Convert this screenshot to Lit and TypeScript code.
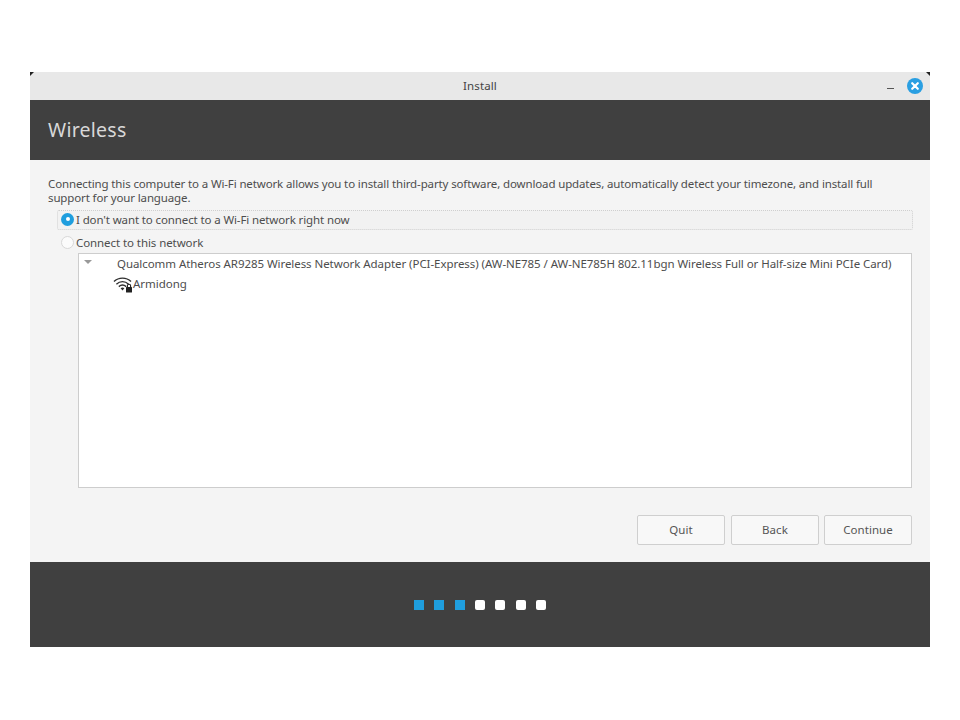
import { LitElement, html, css } from "lit";
import { customElement } from "lit/decorators.js";

@customElement("app-root")
export class AppRoot extends LitElement {
  static styles = css`
    :host { display: block; width: 960px; height: 720px; background: #fff; font-family: "Noto Sans", "Open Sans", sans-serif; font-size: 11.5px; color: #4d4d4d; }
    .page { padding-top: 72px; padding-left: 30px; width: 900px; }
    .window { position: relative; width: 900px; height: 575px; display: flex; flex-direction: column; background: #f4f4f4; }
    .corner { position: absolute; top: 0; width: 4px; height: 4px; background: #222; }
    .corner.l { left: 0; clip-path: polygon(0 0, 100% 0, 0 100%); }
    .corner.r { right: 0; clip-path: polygon(0 0, 100% 0, 100% 100%); }
    .titlebar { height: 28px; flex: none; background: #e8e8e8; display: grid; grid-template-columns: 1fr auto 1fr; align-items: center; }
    .title { grid-column: 2; font-size: 11.5px; color: #444; letter-spacing: 0.1px; padding-bottom: 1px; }
    .winbtns { grid-column: 3; justify-self: end; display: flex; align-items: center; gap: 13px; padding-right: 7px; padding-bottom: 1px; }
    .min { width: 7px; height: 1px; background: #555; margin-top: 5px; }
    .close { display: block; width: 16px; height: 16px; }
    .header { height: 60px; flex: none; background: #404040; display: flex; align-items: center; padding-left: 18px; font-size: 19.5px; color: #d8d8d8; box-sizing: border-box; padding-bottom: 1px; letter-spacing: 0.25px; }
    .content { flex: 1; display: flex; flex-direction: column; padding: 17px 18px 17px 18px; min-height: 0; }
    .intro { margin: 0; line-height: 14px; font-size: 11.5px; letter-spacing: -0.13px; }
    .radio-row { display: flex; align-items: center; gap: 2px; height: 20px; box-sizing: border-box; padding-left: 13px; letter-spacing: -0.12px; }
    .radio-row.focus { margin-top: 5px; margin-left: 9px; margin-right: -1px; padding-left: 3px; padding-bottom: 2px; border: 1px dotted #cfcfcf; border-radius: 2px; background: #f2f2f2; }
    .radio-row.plain { margin-top: 3px; padding-bottom: 1px; letter-spacing: -0.08px; }
    .dot { width: 13px; height: 13px; box-sizing: border-box; border-radius: 50%; flex: none; }
    .dot.on { background: #1f9ede; display: flex; align-items: center; justify-content: center; }
    .dot.on::after { content: ""; width: 4px; height: 4px; border-radius: 50%; background: #fff; }
    .dot.off { background: #fbfbfb; border: 1px solid #d8d8d8; }
    .tree { flex: 1; margin: 0 0 0 30px; background: #fff; border: 1px solid #cdcdcd; min-height: 0; padding-top: 1px; }
    .adapter { display: flex; align-items: center; height: 16px; padding-left: 5px; letter-spacing: -0.06px; white-space: nowrap; }
    .arrow { width: 0; height: 0; border-left: 4.5px solid transparent; border-right: 4.5px solid transparent; border-top: 4px solid #999; margin-right: 25px; margin-bottom: 3px; }
    .net { display: flex; align-items: center; height: 17px; margin-top: 4px; padding-left: 34px; letter-spacing: -0.02px; }
    .wifi { width: 20px; height: 17px; flex: none; display: block; margin-top: 2px; }
    .buttons { display: flex; justify-content: flex-end; gap: 5px; margin-top: 27px; }
    .btn { width: 88px; height: 30px; box-sizing: border-box; border: 1px solid #cfcfcf; border-radius: 2px; background: #f8f8f8; font: inherit; color: #555; padding: 0 0 2px; font-size: 11.5px; letter-spacing: 0.05px; }
    .btn.first { margin-right: 1px; }
    .footer { height: 85px; flex: none; background: #404040; display: flex; align-items: center; justify-content: center; gap: 10.3px; }
    .step { width: 10px; height: 10px; border-radius: 2px; background: #fff; }
    .step.done { background: #1f9ede; border-radius: 0; }
  `;

  render() {
    const steps = [1, 1, 1, 0, 0, 0, 0];
    return html`
      <div class="page">
        <div class="window">
          <div class="titlebar">
            <span class="title">Install</span>
            <div class="winbtns">
              <span class="min"></span>
              <svg class="close" viewBox="0 0 16 16">
                <circle cx="8" cy="8" r="8" fill="#2a9fe2"></circle>
                <path d="M5.2 5.2 10.8 10.8M10.8 5.2 5.2 10.8" stroke="#fff" stroke-width="2.2" stroke-linecap="round"></path>
              </svg>
            </div>
          </div>
          <div class="header">Wireless</div>
          <div class="content">
            <p class="intro">Connecting this computer to a Wi-Fi network allows you to install third-party software, download updates, automatically detect your timezone, and install full support for your language.</p>
            <div class="radio-row focus"><span class="dot on"></span>I don't want to connect to a Wi-Fi network right now</div>
            <div class="radio-row plain"><span class="dot off"></span>Connect to this network</div>
            <div class="tree">
              <div class="adapter"><span class="arrow"></span>Qualcomm Atheros AR9285 Wireless Network Adapter (PCI-Express) (AW-NE785 / AW-NE785H 802.11bgn Wireless Full or Half-size Mini PCIe Card)</div>
              <div class="net">
                <svg class="wifi" viewBox="0 0 20 17">
                  <g fill="none" stroke="#2e2e2e" stroke-width="1.4">
                    <path d="M1 5.6C5.6 1 13.4 1 18 5.6"></path>
                    <path d="M3.4 8.2C7 4.8 12 4.8 15.6 8.2"></path>
                    <path d="M5.8 10.6C8 8.8 11 8.8 13.2 10.6"></path>
                  </g>
                  <path d="M7.6 12.2C8.8 11.2 10.2 11.2 11.4 12.2L9.5 14.4Z" fill="#2e2e2e"></path>
                  <rect x="13" y="11" width="6" height="5.4" rx="0.5" fill="#222"></rect>
                  <path d="M14.4 11V9.8a1.6 1.6 0 0 1 3.2 0V11" fill="none" stroke="#222" stroke-width="1.1"></path>
                </svg>
                <span>Armidong</span>
              </div>
            </div>
            <div class="buttons">
              <button class="btn first">Quit</button>
              <button class="btn">Back</button>
              <button class="btn">Continue</button>
            </div>
          </div>
          <div class="footer">
            ${steps.map((s) => html`<span class="step ${s ? "done" : ""}"></span>`)}
          </div>
          <span class="corner l"></span>
          <span class="corner r"></span>
        </div>
      </div>
    `;
  }
}
